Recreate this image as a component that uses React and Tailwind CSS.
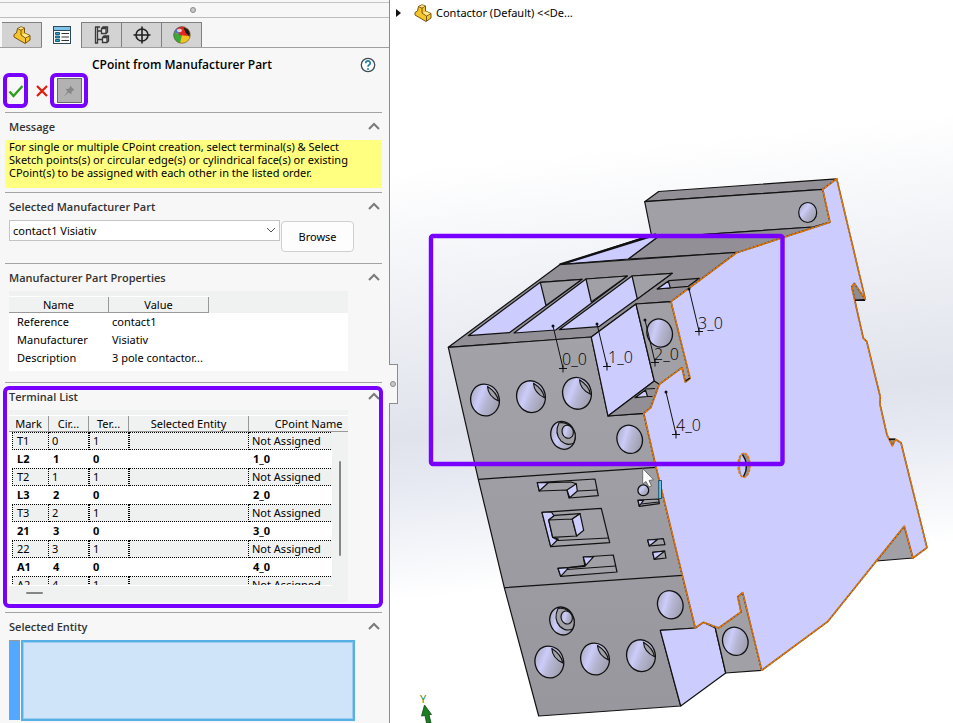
import { useState } from "react";

const PROPERTIES = [
  { name: "Reference", value: "contact1" },
  { name: "Manufacturer", value: "Visiativ" },
  { name: "Description", value: "3 pole contactor..." },
];

const TERMINALS = [
  { mark: "T1", circuit: 0, terminal: 1 },
  { mark: "L2", circuit: 1, terminal: 0, cpoint: "1_0" },
  { mark: "T2", circuit: 1, terminal: 1 },
  { mark: "L3", circuit: 2, terminal: 0, cpoint: "2_0" },
  { mark: "T3", circuit: 2, terminal: 1 },
  { mark: "21", circuit: 3, terminal: 0, cpoint: "3_0" },
  { mark: "22", circuit: 3, terminal: 1 },
  { mark: "A1", circuit: 4, terminal: 0, cpoint: "4_0" },
  { mark: "A2", circuit: 4, terminal: 1 },
];

function PartIcon({ className }) {
  return (
    <svg className={className} viewBox="0 0 18 18" strokeLinejoin="round">
      <path d="M1 8.5 L3.5 7 L4.5 2.5 L8 0.8 L11.5 2 L11.5 7 L17 9.5 L17 14 L12 17.5 L1 11 Z" fill="#f5c52c" stroke="#7a5310" />
      <path d="M4.5 2.5 L8 4 L8 9 L12.5 12 L12.5 17 M8 4 L11.5 2 M12.5 12 L17 9.5" fill="none" stroke="#7a5310" />
      <path d="M5 2.4 L8 1.2 L11 2.1 L8 3.5 Z M8.8 8.8 L12 7.6 L16.2 9.6 L12.6 11.5 Z" fill="#ffe98c" />
    </svg>
  );
}

function PropertyIcon() {
  return (
    <svg className="h-[18px] w-[18px]" viewBox="0 0 18 18">
      <rect x="0.5" y="0.5" width="17" height="17" fill="#fff" stroke="#2f4a5c" />
      <rect x="1" y="1" width="16" height="3" fill="#7fc4e8" />
      <path d="M0.5 4.5 H17.5" stroke="#2f4a5c" />
      <path d="M2.5 6.5 h4 v2 h-4 z M2.5 10 h4 v2 h-4 z M2.5 13.5 h4 v2 h-4 z" fill="#2f9fd0" stroke="#1c5f80" />
      <path d="M8.5 7.5 H16 M8.5 11 H16 M8.5 14.5 H16" stroke="#333" />
    </svg>
  );
}

function ConfigIcon() {
  return (
    <svg className="h-[18px] w-[18px]" viewBox="0 0 18 18" fill="none" stroke="#3a3a3a" strokeWidth="1.3">
      <path d="M2 1 h5 M2.5 1 v16 h2 v-16 M4.5 5 h4 M4.5 13.5 h5" />
      <path d="M8.5 2.5 l1.5 -1.5 h4.5 v5 l-1.5 1.5 h-4.5 z M8.5 2.5 h4.5 v5 M9.5 11.5 l1.5 -1.5 h4.5 v5 l-1.5 1.5 h-4.5 z M9.5 11.5 h4.5 v5" fill="#e6e6e6" />
    </svg>
  );
}

function TargetIcon() {
  return (
    <svg className="h-[18px] w-[18px]" viewBox="0 0 18 18" fill="none" stroke="#222" strokeWidth="1.6">
      <circle cx="9" cy="9" r="6" />
      <path d="M9 0.5 V17.5 M0.5 9 H17.5" />
    </svg>
  );
}

function AppearanceIcon() {
  return (
    <svg className="h-[18px] w-[18px]" viewBox="0 0 18 18">
      <circle cx="9" cy="9" r="8.5" fill="#f4c21c" />
      <path d="M9 9 L1 6.5 A8.5 8.5 0 0 0 7 17.3 Z" fill="#3da83a" />
      <path d="M1 6.5 A8.5 8.5 0 0 1 9 0.5 L6 8 Z" fill="#4b78d8" />
      <path d="M5 1.7 A8.5 8.5 0 0 1 12 1 L15 10 L6 9 Z" fill="#e02a20" />
      <path d="M10.5 1.5 L15 3 L17 7 L16.5 11 L12.5 6.5 Z" fill="#1b1b1b" />
      <ellipse cx="6.5" cy="4.5" rx="2.5" ry="1.8" fill="#fff" opacity="0.75" />
      <circle cx="9" cy="9" r="8.3" fill="none" stroke="#555" strokeWidth="0.6" />
    </svg>
  );
}

const TABS = [
  { id: "tree", label: "FeatureManager", icon: <PartIcon className="h-[18px] w-[18px]" /> },
  { id: "property", label: "PropertyManager", icon: <PropertyIcon /> },
  { id: "config", label: "ConfigurationManager", icon: <ConfigIcon /> },
  { id: "target", label: "DimXpertManager", icon: <TargetIcon /> },
  { id: "display", label: "DisplayManager", icon: <AppearanceIcon /> },
];

function Section({ title, bodyClass, children, highlighted }) {
  const [open, setOpen] = useState(true);

  return (
    <section className="relative mr-[7px] ml-[5px] border-t border-[#a3a3a3]">
      <button
        type="button"
        onClick={() => setOpen(!open)}
        className="flex h-[27px] w-full items-center justify-between pt-px pr-[2px] pl-1 font-['Open_Sans',sans-serif] text-[11px] font-semibold text-[#333]"
      >
        {title}
        <svg className="h-3 w-3" viewBox="0 0 12 12" fill="none" stroke="#7a7a7a" strokeWidth="2">
          <path d="M1 8 L6 3 L11 8" />
        </svg>
      </button>
      {open && <div className={bodyClass}>{children}</div>}
      {highlighted && (
        <div className="pointer-events-none absolute -top-px -right-px bottom-1 -left-[2px] mt-1 rounded-md border-4 border-[#7700ff]"></div>
      )}
    </section>
  );
}

function HeaderCell({ children, className = "" }) {
  return (
    <th className={`h-[17px] border-t border-t-white border-b border-b-[#999] p-0 font-normal ${className}`}>
      <div className="truncate border-r border-[#999] text-center leading-[15px]">{children}</div>
    </th>
  );
}

function TerminalRow({ row }) {
  if (row.cpoint) {
    return (
      <tr className="h-[18px] bg-white font-bold">
        <td className="p-0 pl-2">{row.mark}</td>
        <td className="p-0 pl-1">{row.circuit}</td>
        <td className="p-0 pl-1">{row.terminal}</td>
        <td className="p-0"></td>
        <td className="p-0 pl-1">{row.cpoint}</td>
      </tr>
    );
  }

  const cell = "h-[18px] border-y border-r border-dotted border-black bg-[#eff1f0] leading-4";
  return (
    <tr className="h-[18px] bg-white">
      <td className="p-0 pl-[3px]">
        <div className={`${cell} border-l pl-1`}>{row.mark}</div>
      </td>
      <td className="p-0">
        <div className={`${cell} pl-[3px]`}>{row.circuit}</div>
      </td>
      <td className="p-0">
        <div className={`${cell} border-l pl-[3px]`}>{row.terminal}</div>
      </td>
      <td className="p-0">
        <div className={`${cell} border-l`}></div>
      </td>
      <td className="p-0">
        <div className={`${cell} pl-[3px]`}>Not Assigned</div>
      </td>
    </tr>
  );
}

function PropertyPanel() {
  const [activeTab, setActiveTab] = useState("property");
  const [part, setPart] = useState("contact1 Visiativ");
  const [pinned, setPinned] = useState(true);

  return (
    <aside className="relative flex w-[390px] shrink-0 flex-col border-r border-[#8c8c8c] bg-[#f7f7f7]">
      {/* Collapse grip above the tabs */}
      <div className="flex h-[18px] flex-col items-center border-b border-[#bdbdbd] pt-[2px]">
        <div className="h-1 w-full border-t border-[#c4c4c4]"></div>
        <div className="mt-px mr-1 h-[6px] w-[6px] rounded-full border border-[#8a8a8a] bg-[#c8c8c8]"></div>
      </div>

      <div className="flex border-b border-[#a0a0a0] pt-1 pl-[2px]">
        {TABS.map((tab) => (
          <button
            key={tab.id}
            type="button"
            aria-label={tab.label}
            onClick={() => setActiveTab(tab.id)}
            className={
              tab.id === activeTab
                ? "-mb-px flex h-[26px] w-10 items-center justify-center border-r border-[#808080] bg-[#f7f7f7]"
                : "flex h-[25px] w-10 items-center justify-center border-t border-r border-[#808080] bg-[#d3d3d3]"
            }
          >
            {tab.icon}
          </button>
        ))}
      </div>

      <div className="flex h-[25px] items-center pt-2 pr-[13px]">
        <h1 className="flex-1 pl-1 text-center font-['Open_Sans',sans-serif] text-xs font-semibold text-black">
          CPoint from Manufacturer Part
        </h1>
        <button type="button" aria-label="Help">
          <svg className="h-4 w-4" viewBox="0 0 16 16" fill="none">
            <circle cx="8" cy="8" r="6.7" fill="#fff" stroke="#3c4a54" strokeWidth="1.3" />
            <path d="M5.8 6.2 A2.2 2.2 0 1 1 9 8 Q8 8.6 8 9.8" stroke="#1f7fa8" strokeWidth="1.6" />
            <circle cx="8" cy="12" r="1" fill="#1f7fa8" />
          </svg>
        </button>
      </div>

      <div className="mb-1 flex h-[35px] items-center pl-[3px]">
        <button type="button" aria-label="OK" className="flex h-[35px] w-[25px] items-center justify-center rounded-md border-4 border-[#7700ff]">
          <svg className="h-4 w-4 shrink-0" viewBox="0 0 16 16" fill="none" stroke="#2f9e1c" strokeWidth="2.4">
            <path d="M1.5 8.5 L5.5 13 L14.5 3" />
          </svg>
        </button>
        <button type="button" aria-label="Cancel" className="flex h-6 w-[22px] items-center justify-center pl-[6px]">
          <svg className="h-3 w-3 shrink-0" viewBox="0 0 12 12" stroke="#dd1c0c" strokeWidth="2.2">
            <path d="M1 1 L11 11 M11 1 L1 11" />
          </svg>
        </button>
        <button
          type="button"
          aria-label="Keep visible"
          aria-pressed={pinned}
          onClick={() => setPinned(!pinned)}
          className="flex h-[35px] w-[38px] items-center justify-center rounded-md border-4 border-[#7700ff]"
        >
          <span className="flex h-[25px] w-[25px] items-center justify-center border border-[#6a6a6a] bg-[#b2b2b2]">
            <svg className="h-3 w-3" viewBox="0 0 12 12">
              <path d="M7 0.5 L11.5 5 L10 5.5 L8.5 7 L8.5 9.5 L5.5 7.5 L1 11.5 L4.5 6.5 L2.5 3.8 L5.3 4 L6.8 2.5 Z" fill="#878787" />
            </svg>
          </span>
        </button>
      </div>

      <Section title="Message" bodyClass="pb-1">
        <p className="h-12 bg-[#ffff80] pl-1 text-[11px] leading-[13px] text-black">
          For single or multiple CPoint creation, select terminal(s) &amp; Select
          <br />
          Sketch points(s) or circular edge(s) or cylindrical face(s) or existing
          <br />
          CPoint(s) to be assigned with each other in the listed order.
        </p>
      </Section>

      <Section title="Selected Manufacturer Part" bodyClass="flex items-start pb-[11px] pl-1">
        <div className="relative w-[271px]">
          <select
            aria-label="Selected Manufacturer Part"
            value={part}
            onChange={(e) => setPart(e.target.value)}
            className="block h-[21px] w-full appearance-none border border-[#c4c4c4] bg-white pt-px pl-[3px] text-[11px] text-black"
          >
            <option>contact1 Visiativ</option>
          </select>
          <svg className="pointer-events-none absolute top-[5px] right-1 h-[10px] w-[10px]" viewBox="0 0 10 10" fill="none" stroke="#555">
            <path d="M1 3 L5 7 L9 3" />
          </svg>
        </div>
        <button type="button" className="mt-px ml-px h-[31px] w-[73px] rounded border border-[#cfcfcf] bg-[#fdfdfd] pt-px text-[11px] text-black">
          Browse
        </button>
      </Section>

      <Section title="Manufacturer Part Properties" bodyClass="pb-[11px] pl-1">
        <div className="h-20 w-[339px] bg-white text-[11px] text-black">
          <div className="h-[22px] bg-[#f0f2f1] pt-[5px]">
            <table className="w-[200px] table-fixed border-separate border-spacing-0">
              <thead>
                <tr>
                  <HeaderCell>Name</HeaderCell>
                  <HeaderCell>Value</HeaderCell>
                </tr>
              </thead>
              <tbody>
                {PROPERTIES.map((item) => (
                  <tr key={item.name} className="h-[18px]">
                    <td className="p-0 pl-2">{item.name}</td>
                    <td className="p-0 pl-[3px]">{item.value}</td>
                  </tr>
                ))}
              </tbody>
            </table>
          </div>
        </div>
      </Section>

      <Section title="Terminal List" bodyClass="pb-[10px] pl-1" highlighted>
        <div className="relative h-48 w-[339px] bg-[#f0f2f1] text-[11px] text-black">
          <div className="h-[176px] overflow-hidden border-b border-white pt-[5px]">
            <table className="w-[360px] table-fixed border-separate border-spacing-0">
              <thead>
                <tr>
                  <HeaderCell className="w-10">Mark</HeaderCell>
                  <HeaderCell className="w-10">Cir...</HeaderCell>
                  <HeaderCell className="w-10">Ter...</HeaderCell>
                  <HeaderCell className="w-[120px]">Selected Entity</HeaderCell>
                  <HeaderCell className="w-[120px]">CPoint Name</HeaderCell>
                </tr>
              </thead>
              <tbody>
                {TERMINALS.map((row) => (
                  <TerminalRow key={row.mark} row={row} />
                ))}
              </tbody>
            </table>
          </div>
          {/* Scroll bars */}
          <div className="absolute top-[22px] right-0 bottom-0 w-4 bg-[#f0f2f1]">
            <div className="mt-[29px] ml-[7px] h-[95px] w-[2px] rounded-full bg-[#858585]"></div>
          </div>
          <div className="absolute bottom-2 left-[17px] h-[2px] w-[17px] rounded-full bg-[#858585]"></div>
        </div>
      </Section>

      <Section title="Selected Entity" bodyClass="flex pl-1">
        <div className="h-20 w-[11px] border-t border-[#999] bg-[#55a8ff]"></div>
        <textarea
          aria-label="Selected Entity"
          readOnly
          className="ml-px h-[81px] w-[334px] resize-none border-2 border-[#56b0e6] bg-[#cfe4f9] ring-1 ring-[#9ccbf0] outline-none ring-inset"
        ></textarea>
      </Section>

      {/* Splitter handle */}
      <div className="absolute top-[364px] -right-[9px] z-10 flex h-10 w-[9px] items-center justify-center border border-l-0 border-[#8c8c8c] bg-[#f7f7f7]">
        <div className="h-[6px] w-[6px] shrink-0 rounded-full border border-[#8a8a8a] bg-[#c8c8c8]"></div>
      </div>
    </aside>
  );
}

const BIG_HOLES = [
  [485, 400],
  [531, 396.7],
  [577, 393.3],
  [549.3, 662],
  [595, 659],
  [641, 655.7],
];

const PLAIN_HOLES = [
  [629.7, 439.3],
  [670.3, 604.7],
  [735.3, 641.3],
  [659.7, 333],
];

const STEPPED_HOLES = [
  [563, 435.3],
  [562, 621],
];

const CPOINTS = [
  { name: "0_0", from: [553, 326], to: [563, 368], text: [562, 365] },
  { name: "1_0", from: [597, 324], to: [607, 366], text: [608, 363] },
  { name: "2_0", from: [645, 320], to: [655, 362], text: [654, 360] },
  { name: "3_0", from: [689, 289], to: [699, 331], text: [698, 329] },
  { name: "4_0", from: [666, 392], to: [676, 434], text: [676, 431] },
];

const SIDE_FACE =
  "M836.7 178.8 L822.7 189.3 L830 222.3 L736.7 252.7 L671 301.7 L690 378.3 L685.3 382 L682 367.7 L659.3 384.3 L650.7 407.7 L643.7 413.3 L656 467 L682.3 575.3 L695.3 628 L703.3 622.3 L718.7 628 L741 612 L737.7 596.7 L742.7 592.7 L761.7 670.3 L828 621.3 L876.3 561 L904.3 526.3 L913 558 L927 547.7 L901 442.7 L895.3 439.3 L892.3 445.7 L889.3 439.3 L887 435 L880 404.4 L880.3 397 L866.7 341.4 L863.3 338.2 L851.7 286.7 L854.3 283.3 L865.3 299.3 Z";

function ContactorModel() {
  return (
    <svg className="h-full w-full" viewBox="390 0 563 723" preserveAspectRatio="xMinYMin meet" strokeLinejoin="round">
      <defs>
        <linearGradient id="bore" x1="0" y1="0.1" x2="1" y2="0.9">
          <stop offset="0" stopColor="#a2a2b4" />
          <stop offset="0.35" stopColor="#ccccfa" />
          <stop offset="0.55" stopColor="#b6b6d4" />
          <stop offset="1" stopColor="#9696a0" />
        </linearGradient>
        <linearGradient id="front" x1="0" y1="0" x2="0" y2="1">
          <stop offset="0" stopColor="#a3a2a8" />
          <stop offset="1" stopColor="#98979d" />
        </linearGradient>
      </defs>

      <g stroke="#111" strokeWidth="1.2">
        {/* Rear mounting block */}
        <path d="M644.7 201.7 L658.7 191.5 L836.7 178.8 L822.7 189.3 Z" fill="#929096" />
        <path d="M644.7 201.7 L822.7 189.3 L830 222.3 L813 227 L652 238 Z" fill="#a1a0a6" />
        <ellipse cx="807.7" cy="212.5" rx="9" ry="10" fill="url(#bore)" />

        {/* Top faces */}
        <path d="M657 237.5 L813 227 L830 222.3 L736.7 252.7 L628.3 259 Z" fill="#929096" />
        <path d="M559.7 264.7 L650 235.5 L657 237.5 L628.3 259 L565 264 Z" fill="#ccccff" />
        <path d="M559.7 264.7 L656 234.5" strokeWidth="2.4" />
        <path d="M448.3 347.3 L559.7 264.7 L736.7 252.3 L671 301.7 L636 304 L591.3 337 Z" fill="#929096" />

        {/* Slots between the poles */}
        <path d="M468.3 335.7 L540.3 282.3 L582 279.3 L509.3 332.7 Z" fill="#ccccff" />
        <path d="M540.3 282.3 L582 279.3 L546 305.5 Z" fill="#a1a0a6" />
        <path d="M514 333 L586 279 L627.3 276 L555.7 330 Z" fill="#ccccff" />
        <path d="M586 279 L627.3 276 L591.3 302 Z" fill="#a1a0a6" />
        <path d="M559.3 329.7 L632 276 L672.3 273.3 L598.7 326.7 Z" fill="#ccccff" />
        <path d="M632 276 L672.3 273.3 L637.3 299 Z" fill="#a1a0a6" />
        <path d="M657.3 289 L669 280.7 L699.3 278.3 L688.3 286.3 Z" fill="#929096" />
        <path d="M657.3 289 L668.3 281.3 L670.3 287.8 Z" fill="#ccccff" />

        {/* Front face */}
        <path
          d="M448.3 347.3 L591.3 337 L608 416 L643.7 413.3 L656 467 L682.3 575.3 L695.3 628 L660.3 630.3 L680.7 706 L538.7 716 L504.3 587.7 L478.3 479.3 Z"
          fill="url(#front)"
        />
        <path d="M478.3 479.3 L656 467.3 M504.3 587.7 L682.3 575.3" fill="none" />

        {/* Open pole pocket and the ledge under it */}
        <path d="M591.3 337 L636 304 L654.3 381 L608 416 Z" fill="#ccccff" />
        <path d="M608 416 L654.3 381 L662 380 L659.3 384.3 L650.7 407.7 L643.7 413.3 Z" fill="#929096" />
        <path d="M635 397.7 L645.5 390 L647.5 396.5 Z" fill="#ccccff" />
        <path d="M645.5 389 L655 388.5 M647.5 396.5 L652.5 396.5 M654.3 381 L662 380" fill="none" />
        <path d="M636 304 L671 301.7 L690 378.3 L685.3 382 L682 367.7 L659.3 384.3 L654.3 381 Z" fill="#a1a0a6" />

        {/* Lower right pocket */}
        <path d="M660.3 630.3 L695.3 628 L703.3 622.3 L715.3 628 L725.7 673 L680.7 706 Z" fill="#ccccff" />
        <path d="M715.3 628 L741 612 L737.7 596.7 L742.7 592.7 L761.7 670.3 L725.7 673 Z" fill="#a1a0a6" />
        <path d="M904.3 526.3 L913 558 L876.3 561 Z" fill="#a1a0a6" />
        <path d="M851.7 286.7 L854.3 283.3 L865.3 299.3 L855 300.5 Z" fill="#8e8d93" />
        <path d="M889.3 439.3 L895.3 439.3 L892.3 445.7 Z" fill="#8e8d93" />
      </g>

      {/* Selected side face */}
      <path d={SIDE_FACE} fill="#ccccff" stroke="#6f5a4a" strokeWidth="1.6" />
      <path d={SIDE_FACE} fill="none" stroke="#e87800" strokeWidth="1.6" strokeDasharray="3 1" />
      <path d="M855 300.3 H865 M889 439.3 H895 M685.5 381 L690 378" stroke="#111" strokeWidth="1.4" />
      <ellipse cx="744" cy="465.3" rx="6" ry="12" fill="#929096" stroke="#e87800" strokeWidth="1.6" strokeDasharray="3 1" />
      <path d="M741.5 455.5 Q738.5 465 741.5 475 L743.5 476.5 Q749.5 465 743 454 Z" fill="#ccccff" />
      <path d="M742.5 454.5 Q750 465 743.5 476.5" fill="none" stroke="#111" strokeWidth="1.4" />

      {/* Bores */}
      <g stroke="#111" strokeWidth="1.3">
        {BIG_HOLES.map(([x, y]) => (
          <g key={`${x}-${y}`} transform={`translate(${x} ${y})`}>
            <ellipse rx="14.3" ry="16" fill="url(#bore)" transform="rotate(-14)" />
            <path d="M2.5 -13.5 Q3 -4 13.5 1 Q12 -7.5 2.5 -13.5 Z" fill="#a1a0a6" strokeWidth="1.1" />
          </g>
        ))}
        {PLAIN_HOLES.map(([x, y]) => (
          <ellipse key={`${x}-${y}`} cx={x} cy={y} rx="12.6" ry="14.3" fill="url(#bore)" transform={`rotate(-20 ${x} ${y})`} />
        ))}
        {STEPPED_HOLES.map(([x, y]) => (
          <g key={`${x}-${y}`} transform={`translate(${x} ${y})`}>
            <ellipse rx="12" ry="14.2" fill="url(#bore)" transform="rotate(-20)" />
            <path d="M-4 -12.5 Q-9 -2 -2 5.5 Q4 11 10.5 8 Q13.5 2 11.5 -3.5 Q6 -14 -4 -12.5 Z" fill="#a1a0a6" strokeWidth="1.1" />
            <ellipse cx="4.7" cy="-3.5" rx="5.6" ry="6.6" fill="url(#bore)" strokeWidth="1.1" transform="rotate(-20 4.7 -3.5)" />
          </g>
        ))}
        <circle cx="643.3" cy="490.3" r="5.4" fill="url(#bore)" />
      </g>

      {/* Recesses in the middle of the front face */}
      <g stroke="#111" strokeWidth="1.2" fill="none">
        <path d="M537.3 482.7 L595 479 L598.3 495.7 L569 498 L567 490 L539.3 491 Z" fill="#a1a0a6" />
        <path d="M537.3 482.7 L548.3 482.7 L539.3 491 Z M567 490 L576.3 483.7 L577.3 491 L569.7 497.7 Z" fill="#ccccff" />
        <path d="M548.3 482.7 L571 482 L576.3 483.7 M577.3 491 L597 490" />

        <path d="M542 512.3 L601.3 508.3 L609.7 542.7 L550.7 546.7 Z" fill="#a1a0a6" />
        <path d="M542 512.3 L551.5 512 L554 516 L548.7 520 L552.7 537.5 L558.3 539 L550.7 546.7 Z" fill="#ccccff" />
        <path d="M552.7 537.3 L558.3 540.5 L608.5 538" />
        <path d="M548.7 520 L572.3 519 L576.7 536 L552.7 537.3 Z M548.7 520 L554.7 515.3 L580 513.7 L572.3 519" fill="#a1a0a6" />
        <path d="M572.3 519 L580 513.7 L583.7 530.3 L576.7 536 Z" fill="#ccccff" />

        <path d="M558 568.3 L585 566.3 L583.3 557 L613.3 555 L617 572 L560.7 576.3 Z" fill="#a1a0a6" />
        <path d="M558 568.3 L568.7 567.7 L560.7 576.3 Z M583.3 557 L593.7 556.7 L585.7 565.3 Z" fill="#ccccff" />
        <path d="M567 569.5 L615.5 566 M568.7 567.7 L585.7 565.3" />

        <path d="M638 500 L658.7 499 L659.3 503.7 L639.3 506.3 Z M641.5 504 L658.7 502" fill="#a1a0a6" />
        <path d="M638 500.5 L643.5 500.3 L639.3 506 Z" fill="#ccccff" />
        <path d="M647.7 540 L663.3 538.7 L665 544.7 L649.3 546 Z M652.7 552.3 L664.7 551 L666 558 L654.3 559.3 Z" fill="#a1a0a6" />
        <path d="M647.7 540 L657.5 539.5 L649.3 546 Z M652.7 552.3 L664.7 551 L654.3 559.3 Z" fill="#ccccff" />
      </g>
      <rect x="658.7" y="480.5" width="2.8" height="18" fill="#6cc7ea" stroke="#0c4a66" strokeWidth="0.9" />

      {/* Connection points */}
      {CPOINTS.map(({ name, from, to, text }) => (
        <g key={name}>
          <path
            d={`M${from[0]} ${from[1]} L${to[0]} ${to[1]} m-4 0.5 h8 m-4 -4 v8`}
            fill="none"
            stroke="#111"
          />
          <circle cx={from[0]} cy={from[1]} r="1.5" fill="#111" />
          <text x={text[0]} y={text[1]} className="fill-black font-['Open_Sans',sans-serif] text-[16px] font-light">
            {name}
          </text>
        </g>
      ))}

      <rect x="431" y="236" width="351.5" height="228" rx="2" fill="none" stroke="#7700ff" strokeWidth="4.4" />

      {/* Mouse pointer */}
      <path d="M642.7 468.5 L642.7 484 L646 481.5 L649 487 L651.5 485.8 L649 480.5 L653.5 479.7 Z" fill="#fff" stroke="#555" strokeWidth="0.8" />

      {/* Axis triad */}
      <text x="423" y="703" textAnchor="middle" className="fill-[#1b8a1b] font-['Open_Sans',sans-serif] text-[11px]">
        Y
      </text>
      <path d="M424.5 705 L431.5 714.5 L429 714.5 L431 723 L426.5 723 L425 715.5 L421.5 716 Z" fill="#1c7f24" stroke="#0d4a12" strokeWidth="0.8" />
    </svg>
  );
}

export default function App() {
  return (
    <div className="flex h-screen overflow-hidden bg-white font-['Noto_Sans',sans-serif]">
      <PropertyPanel />
      <main className="relative min-w-0 flex-1 bg-[linear-gradient(174deg,#ffffff_22%,#e0e3ec_56%,#e6e9f2_62%,#ffffff_77%)]">
        <ContactorModel />
        {/* Flyout feature tree over the viewport */}
        <div className="absolute top-1 left-[6px] flex items-center text-[11px] text-black">
          <svg className="h-2 w-[5px]" viewBox="0 0 5 8">
            <path d="M0 0 L5 4 L0 8 Z" fill="#111" />
          </svg>
          <PartIcon className="ml-[13px] h-[18px] w-[18px]" />
          <span className="ml-1">Contactor (Default) &lt;&lt;De...</span>
        </div>
      </main>
    </div>
  );
}
